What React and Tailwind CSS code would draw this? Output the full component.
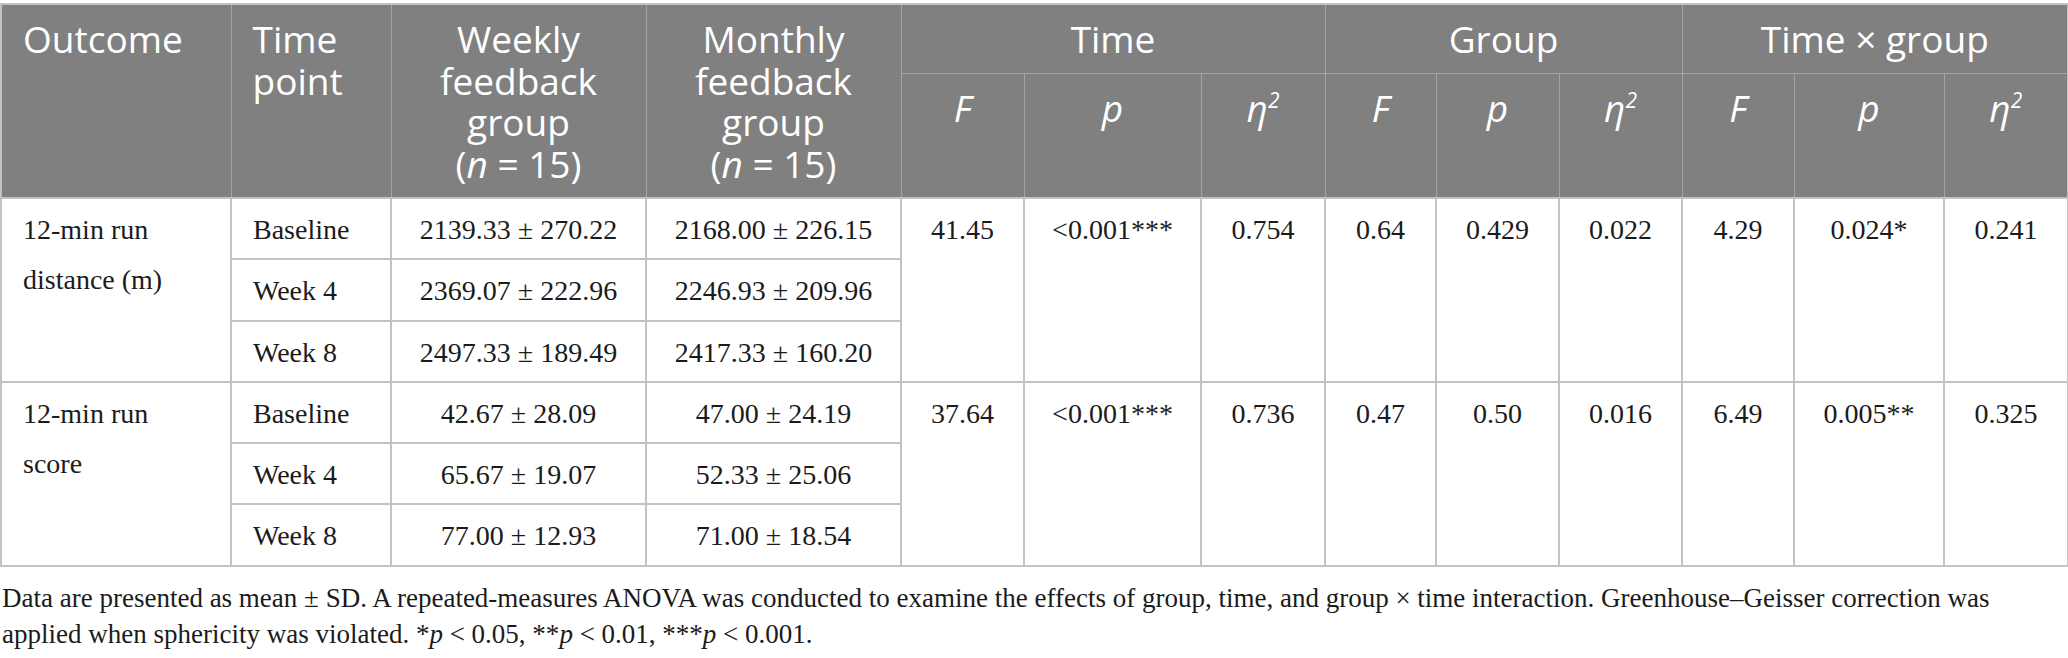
const groups = [
  {
    outcome: ["12-min run", "distance (m)"],
    rows: [
      ["Baseline", "2139.33 ± 270.22", "2168.00 ± 226.15"],
      ["Week 4", "2369.07 ± 222.96", "2246.93 ± 209.96"],
      ["Week 8", "2497.33 ± 189.49", "2417.33 ± 160.20"],
    ],
    stats: ["41.45", "<0.001***", "0.754", "0.64", "0.429", "0.022", "4.29", "0.024*", "0.241"],
  },
  {
    outcome: ["12-min run", "score"],
    rows: [
      ["Baseline", "42.67 ± 28.09", "47.00 ± 24.19"],
      ["Week 4", "65.67 ± 19.07", "52.33 ± 25.06"],
      ["Week 8", "77.00 ± 12.93", "71.00 ± 18.54"],
    ],
    stats: ["37.64", "<0.001***", "0.736", "0.47", "0.50", "0.016", "6.49", "0.005**", "0.325"],
  },
];

const widths = [230, 160, 255, 255, 123, 177, 124, 111, 123, 123, 112, 150, 124];

function Eta() {
  return (
    <span>
      <i>η</i>
      <sup className="text-[21px] italic top-[-14px]">2</sup>
    </span>
  );
}

function SubHead() {
  const cells = [];
  for (let i = 0; i < 3; i++) {
    cells.push(
      <th key={"f" + i} className="border border-[#a4a4a4] align-top pt-[13px] font-normal italic text-center">F</th>,
      <th key={"p" + i} className="border border-[#a4a4a4] align-top pt-[13px] font-normal italic text-center">p</th>,
      <th key={"e" + i} className="border border-[#a4a4a4] align-top pt-[13px] font-normal text-center">
        <Eta />
      </th>
    );
  }
  return <tr>{cells}</tr>;
}

export default function App() {
  const head = "border border-[#a4a4a4] align-top pt-[13px] pb-[13px] font-normal";
  const cell = "border-2 border-[#c3c3c3] align-top pt-[6px]";
  return (
    <div className="w-[2068px] bg-white pt-[3px] text-[#1b1b1b]">
      <table className="table-fixed border-collapse w-[2068px] border-2 border-[#c3c3c3]">
        <colgroup>
          {widths.map((w, i) => (
            <col key={i} style={{ width: w }} />
          ))}
        </colgroup>
        <thead className="bg-[#808080] text-white font-['Open_Sans',sans-serif] text-[37px] leading-[41.5px]">
          <tr className="h-[68px]">
            <th rowSpan={2} className={head + " text-left pl-[21px]"}>Outcome</th>
            <th rowSpan={2} className={head + " text-left pl-[21px]"}>
              Time
              <br />
              point
            </th>
            <th rowSpan={2} className={head + " text-center"}>
              Weekly
              <br />
              feedback
              <br />
              group
              <br />(<i>n</i> = 15)
            </th>
            <th rowSpan={2} className={head + " text-center"}>
              Monthly
              <br />
              feedback
              <br />
              group
              <br />(<i>n</i> = 15)
            </th>
            <th colSpan={3} className={head + " text-center pb-[12px]"}>Time</th>
            <th colSpan={3} className={head + " text-center pb-[12px]"}>Group</th>
            <th colSpan={3} className={head + " text-center pb-[12px]"}>Time × group</th>
          </tr>
          <SubHead />
        </thead>
        <tbody className="font-['Liberation_Serif',serif] text-[28px] leading-[50px]">
          {groups.map((g, gi) =>
            g.rows.map((r, ri) => (
              <tr key={gi + "-" + ri} className="h-[61.3px]">
                {ri === 0 && (
                  <td rowSpan={3} className={cell + " pl-[21px] text-left"}>
                    {g.outcome[0]}
                    <br />
                    {g.outcome[1]}
                  </td>
                )}
                <td className={cell + " pl-[21px] text-left"}>{r[0]}</td>
                <td className={cell + " text-center"}>{r[1]}</td>
                <td className={cell + " text-center"}>{r[2]}</td>
                {ri === 0 &&
                  g.stats.map((s, si) => (
                    <td key={si} rowSpan={3} className={cell + " text-center"}>
                      {s}
                    </td>
                  ))}
              </tr>
            ))
          )}
        </tbody>
      </table>
      <p className="font-['Liberation_Serif',serif] text-[27px] leading-[36px] pl-[2px] mt-[13px]">
        Data are presented as mean ± SD. A repeated-measures ANOVA was conducted to examine the effects of group, time, and
        group × time interaction. Greenhouse–Geisser correction was
        <br />
        applied when sphericity was violated. *<i>p</i> &lt; 0.05, **<i>p</i> &lt; 0.01, ***<i>p</i> &lt; 0.001.
      </p>
    </div>
  );
}
